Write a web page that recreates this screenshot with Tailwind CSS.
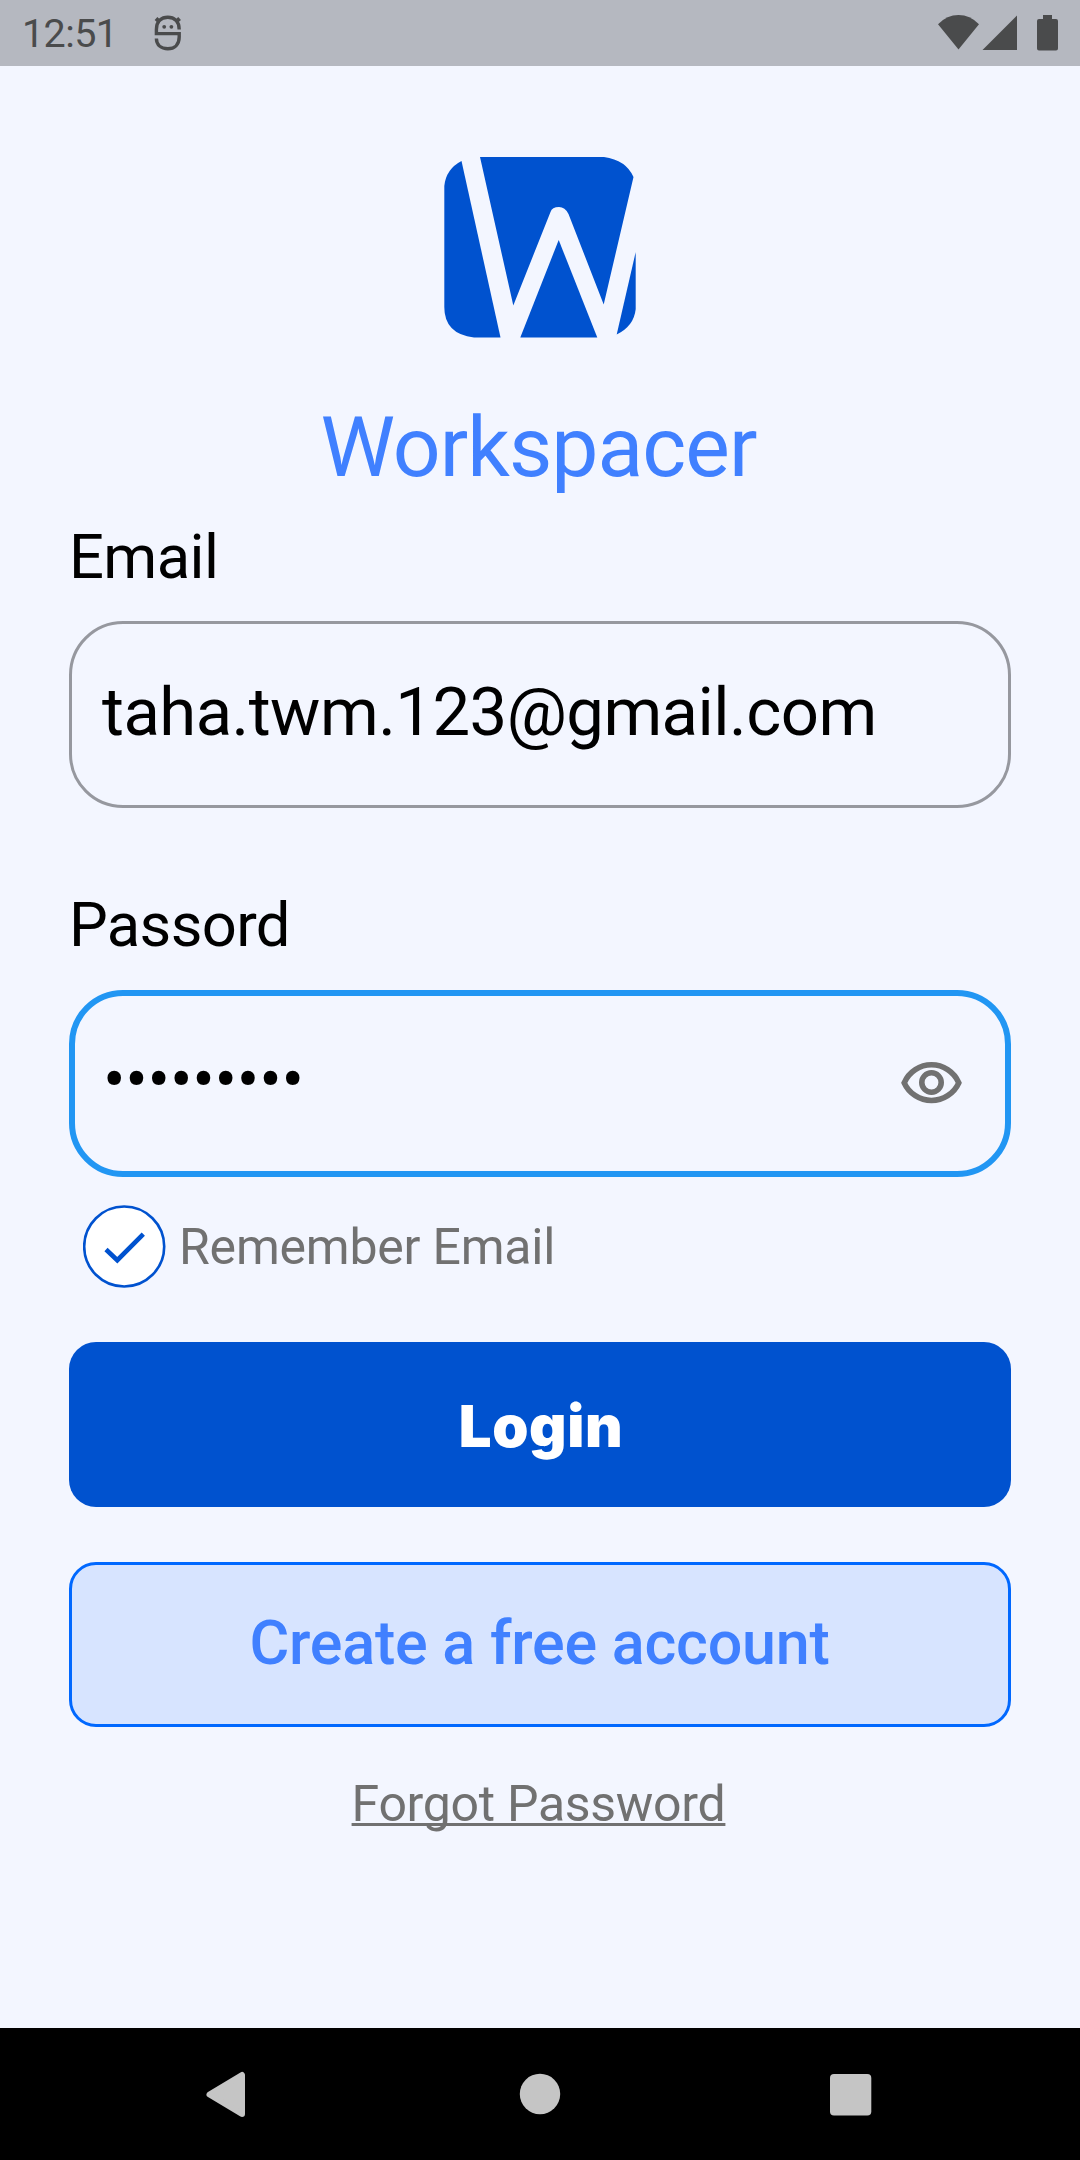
<!DOCTYPE html>
<html lang="en">
<head>
<meta charset="utf-8">
<title>Workspacer</title>
<script src="https://cdn.jsdelivr.net/npm/@tailwindcss/browser@4"></script>
</head>
<body class="flex h-[2160px] w-[1080px] flex-col overflow-hidden bg-[#f3f6ff] font-['Roboto',sans-serif]">
  <!-- Status bar -->
  <header class="flex h-[66px] shrink-0 items-center bg-[#b5b8c0] pl-[22px] text-[#4a4b4c]">
    <span class="pt-[2px] text-[39.5px] leading-[66px] tracking-[-0.6px]">12:51</span>
    <svg class="mt-[1px] ml-[36px] h-[38px] w-[30px]" viewBox="0 0 30 38" fill="none" stroke="currentColor" stroke-width="3.4">
      <path d="M26.2 14.500C26.2 6 21 2.2 14.8 2.2S3.4 6 3.4 14.500V18.6H26.2V22C26.2 29.500 21.4 33.7 14.8 33.7S3.4 30 3.4 23.500"/>
      <path d="M3 3.500L6.8 7M26.6 3.500L22.8 7" stroke-width="4"/>
      <circle cx="11.2" cy="11.8" r="1.9" fill="currentColor" stroke="none"/>
      <circle cx="18.4" cy="11.8" r="1.9" fill="currentColor" stroke="none"/>
    </svg>
    <svg class="ml-auto mr-[20px] h-[66px] w-[124px]" viewBox="936 0 124 66" fill="currentColor">
      <path d="M958.5 49.5L938 24.2Q947 15 958.5 15T979 24.2Z"/>
      <path d="M982.5 50L1017 15.5V50Z"/>
      <path d="M1043 15H1052V19H1056Q1058 19 1058 21V48.5Q1058 50.5 1056 50.5H1039Q1037 50.5 1037 48.5V21Q1037 19 1039 19H1043Z"/>
    </svg>
  </header>

  <main class="flex flex-1 flex-col px-[69px] pt-[91px]">
    <svg class="h-[181px] w-[192px] self-center" viewBox="444 157 192 181" fill="#0052cf">
      <path d="M461.5 161L500.5 337.5H474Q444.3 334 444.3 307V186Q446 169 461.5 161Z"/>
      <path d="M480 157H604Q626 160 633.5 177L603.7 304.5L568.5 214Q565 207 559 207Q552 207 550.5 212L513.3 305.5Z"/>
      <path d="M558.7 240L597.3 337.5H520.3Z"/>
      <path d="M635.7 252V309Q634 326 616.7 334.5Z"/>
    </svg>
    <h1 class="mt-[60px] pr-[3px] text-center text-[84px] leading-[100px] tracking-[-0.95px] text-[#4080ff]">Workspacer</h1>

    <label class="mt-[23px] text-[61.5px] leading-[72px] tracking-[-0.6px] text-black">Email</label>
    <div class="mt-[28px] flex h-[187px] items-center rounded-[54px] border-3 border-[#96989f] pb-[5px] pl-[30px] text-[67px] leading-[80px] tracking-[-0.53px] text-black">taha.twm.123@gmail.com</div>

    <label class="mt-[81px] text-[61.5px] leading-[72px] tracking-[-0.65px] text-black">Passord</label>
    <div class="mt-[29px] flex h-[187px] items-center justify-between rounded-[54px] border-6 border-[#2196f3] pr-[42px] pb-[2px] pl-[28px]">
      <span class="pb-[5px] text-[67px] leading-[80px] tracking-[-0.3px] text-black">•••••••••</span>
      <svg class="h-[42px] w-[62px]" viewBox="901 1062 62 42" fill="none" stroke="#717171" stroke-width="5.6">
        <path d="M904.2 1082.8C909 1071.5 920 1064.8 931.5 1064.8S954 1071.5 958.8 1082.8C954 1093.5 943 1100.5 931.5 1100.5S909 1093.5 904.2 1082.8Z"/>
        <circle cx="931.5" cy="1082.5" r="9.7"/>
      </svg>
    </div>

    <div class="mt-[28px] ml-[14px] flex h-[83px] items-center">
      <svg class="size-[83px]" viewBox="0 0 83 83" fill="none" stroke="#0052cf">
        <circle cx="41.2" cy="41.5" r="40" fill="#fff" stroke-width="2.6"/>
        <path d="M23 44.5L34.3 55.2L60.3 29.2" stroke-width="4.6"/>
      </svg>
      <span class="ml-[13px] text-[50px] leading-[60px] tracking-[-0.22px] text-[#717171]">Remember Email</span>
    </div>

    <button class="mt-[54px] h-[165px] rounded-[27px] bg-[#0052cf] pt-[3px] pl-[2px] font-['Inter',sans-serif] text-[58px] font-black tracking-[0.6px] text-white">Login</button>
    <button class="mt-[55px] h-[165px] rounded-[27px] border-3 border-[#0068ff] bg-[#d7e4ff] pt-[1px] pr-[1px] pb-[3px] text-[61px] font-medium tracking-[-0.23px] text-[#4080ff]">Create a free account</button>
    <a class="mt-[47px] mr-[3px] self-center text-[50px] leading-[60px] tracking-[-0.3px] text-[#717171] underline decoration-[3px] underline-offset-[2px] [text-decoration-skip-ink:none]">Forgot Password</a>
  </main>

  <!-- System navigation bar -->
  <nav class="flex h-[132px] shrink-0 items-center bg-black">
    <svg class="h-[132px] w-full" viewBox="0 2028 1080 132" fill="#c5c5c5">
      <path d="M209.5 2094.5L242 2075V2114Z" stroke="#c5c5c5" stroke-width="6" stroke-linejoin="round"/>
      <circle cx="540" cy="2094" r="20.2"/>
      <rect x="830" y="2074" width="41.3" height="41.5" rx="4"/>
    </svg>
  </nav>
</body>
</html>
